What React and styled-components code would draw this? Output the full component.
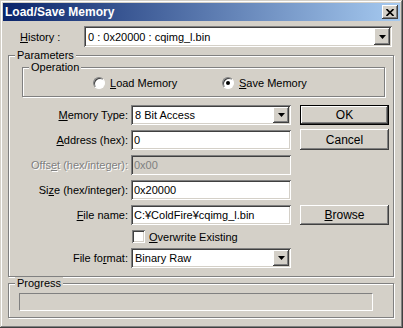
import React from 'react'
import styled, { createGlobalStyle } from 'styled-components'

const GlobalStyle = createGlobalStyle`
  body {
    margin: 0;
    background: #d4d0c8;
  }
  * {
    box-sizing: border-box;
  }
`

const raised = `
  box-shadow: inset -1px -1px #404040, inset 1px 1px #fff, inset -2px -2px #808080, inset 2px 2px #d4d0c8;
`
const sunken = `
  box-shadow: inset 1px 1px #808080, inset -1px -1px #fff, inset 2px 2px #404040, inset -2px -2px #d4d0c8;
`

const Window = styled.div`
  width: 403px;
  height: 328px;
  padding: 3px;
  background: #d4d0c8;
  box-shadow: inset -1px -1px #404040, inset 1px 1px #d4d0c8, inset -2px -2px #808080, inset 2px 2px #fff;
  font: 11px "Liberation Sans", Arial, sans-serif;
  color: #000;
`

const TitleBar = styled.div`
  height: 18px;
  display: flex;
  align-items: center;
  justify-content: space-between;
  padding: 0 2px;
  background: linear-gradient(to right, #0a246a, #a6caf0);
  color: #fff;
  font-weight: bold;
  font-size: 12px;
`

const CloseButton = styled.div`
  width: 16px;
  height: 14px;
  background: #d4d0c8;
  ${raised}
  display: flex;
  align-items: center;
  justify-content: center;
`

const Body = styled.div`
  padding: 5px 0 0 5px;
`

const HistoryRow = styled.div`
  display: flex;
  align-items: center;
  height: 21px;
  padding-left: 12px;
`

const HistoryLabel = styled.span`
  width: 64px;
`

const Group = styled.fieldset`
  margin: ${p => p.$top}px 0 0 ${p => p.$left || 0}px;
  width: ${p => p.$width}px;
  padding: 0 0 ${p => p.$bottom || 0}px 0;
  border: 1px solid #808080;
  box-shadow: inset 1px 1px #fff, 1px 1px #fff;
  min-inline-size: 0;
`

const Legend = styled.legend`
  margin-left: 6px;
  padding: 0 2px;
  background: #d4d0c8;
  line-height: 13px;
`

const RadioRow = styled.div`
  display: flex;
  align-items: center;
  height: 17px;
  margin-bottom: 5px;
  padding-left: 70px;
`

const RadioItem = styled.label`
  display: flex;
  align-items: center;
  gap: 5px;
  width: 129px;
`

const RadioDot = styled.span`
  width: 12px;
  height: 12px;
  border-radius: 50%;
  background: #fff;
  border: 1px solid;
  border-color: #808080 #fff #fff #808080;
  box-shadow: inset 1px 1px #404040;
  display: flex;
  align-items: center;
  justify-content: center;
  &::after {
    content: '';
    width: 4px;
    height: 4px;
    border-radius: 50%;
    background: ${p => (p.$checked ? '#000' : 'transparent')};
  }
`

const Form = styled.div`
  display: grid;
  grid-template-columns: 119px 160px 95px;
  grid-template-rows: 20px 20px 20px 20px 20px 13px 20px;
  column-gap: 3px;
  row-gap: 5px;
  margin-top: 8px;
  align-items: center;
`

const Label = styled.span`
  text-align: right;
  white-space: nowrap;
  color: ${p => (p.$disabled ? '#808080' : '#000')};
  text-shadow: ${p => (p.$disabled ? '1px 1px #fff' : 'none')};
`

const Field = styled.div`
  height: 20px;
  padding: 0 3px;
  display: flex;
  align-items: center;
  background: ${p => (p.$disabled ? '#d4d0c8' : '#fff')};
  color: ${p => (p.$disabled ? '#808080' : '#000')};
  ${sunken}
  white-space: nowrap;
  overflow: hidden;
`

const Combo = styled.div`
  width: ${p => p.$width || 160}px;
  height: ${p => p.$height || 20}px;
  padding: 2px;
  display: flex;
  background: #fff;
  ${sunken}
`

const ComboText = styled.span`
  flex: 1;
  display: flex;
  align-items: center;
  padding-left: 2px;
  white-space: nowrap;
`

const DropButton = styled.span`
  width: 16px;
  background: #d4d0c8;
  ${raised}
  display: flex;
  align-items: center;
  justify-content: center;
`

const Button = styled.div`
  justify-self: end;
  align-self: ${p => p.$align || 'center'};
  width: 89px;
  height: ${p => p.$height || 20}px;
  display: flex;
  align-items: center;
  justify-content: center;
  background: #d4d0c8;
  font-size: 12px;
  ${p => (p.$default
    ? 'border: 1px solid #000; box-shadow: inset -1px -1px #404040, inset 1px 1px #fff, inset -2px -2px #808080;'
    : raised)}
`

const CheckRow = styled.label`
  display: flex;
  align-items: center;
  gap: 4px;
  padding-left: 1px;
`

const CheckBox = styled.span`
  width: 13px;
  height: 13px;
  background: #fff;
  ${sunken}
`

const ProgressBar = styled.div`
  width: 354px;
  height: 18px;
  margin: 3px 0 0 10px;
  border: 1px solid;
  border-color: #808080 #fff #fff #808080;
`

const Arrow = () => (
  <svg width="7" height="4" viewBox="0 0 7 4">
    <polygon points="0,0 7,0 3.5,4" fill="#000" />
  </svg>
)

const ComboBox = ({ value, width, height }) => (
  <Combo $width={width} $height={height}>
    <ComboText>{value}</ComboText>
    <DropButton><Arrow /></DropButton>
  </Combo>
)

export default function App () {
  return (
    <>
      <GlobalStyle />
      <Window>
        <TitleBar>
          <span>Load/Save Memory</span>
          <CloseButton>
            <svg width="8" height="7" viewBox="0 0 8 7">
              <path d="M0.5 0 L7.5 7 M7.5 0 L0.5 7" stroke="#000" strokeWidth="1.6" />
            </svg>
          </CloseButton>
        </TitleBar>
        <Body>
          <HistoryRow>
            <HistoryLabel><u>H</u>istory :</HistoryLabel>
            <ComboBox value="0 : 0x20000 : cqimg_l.bin" width={308} height={21} />
          </HistoryRow>

          <Group $top={2} $width={386} $bottom={8}>
            <Legend>Parameters</Legend>
            <Group $top={-1} $left={13} $width={363}>
              <Legend>Operation</Legend>
              <RadioRow>
                <RadioItem><RadioDot /><span><u>L</u>oad Memory</span></RadioItem>
                <RadioItem><RadioDot $checked /><span><u>S</u>ave Memory</span></RadioItem>
              </RadioRow>
            </Group>

            <Form>
              <Label><u>M</u>emory Type:</Label>
              <ComboBox value="8 Bit Access" />
              <Button $default>OK</Button>

              <Label><u>A</u>ddress (hex):</Label>
              <Field>0</Field>
              <Button $align="end" $height={21}>Cancel</Button>

              <Label $disabled>Offs<u>e</u>t (hex/integer):</Label>
              <Field $disabled>0x00</Field>
              <span />

              <Label>Si<u>z</u>e (hex/integer):</Label>
              <Field>0x20000</Field>
              <span />

              <Label><u>F</u>ile name:</Label>
              <Field>C:¥ColdFire¥cqimg_l.bin</Field>
              <Button><span><u>B</u>rowse</span></Button>

              <span />
              <CheckRow><CheckBox /><span><u>O</u>verwrite Existing</span></CheckRow>
              <span />

              <Label>File fo<u>r</u>mat:</Label>
              <ComboBox value="Binary Raw" />
              <span />
            </Form>
          </Group>

          <Group $top={0} $width={386} $bottom={6}>
            <Legend>Progress</Legend>
            <ProgressBar />
          </Group>
        </Body>
      </Window>
    </>
  )
}
